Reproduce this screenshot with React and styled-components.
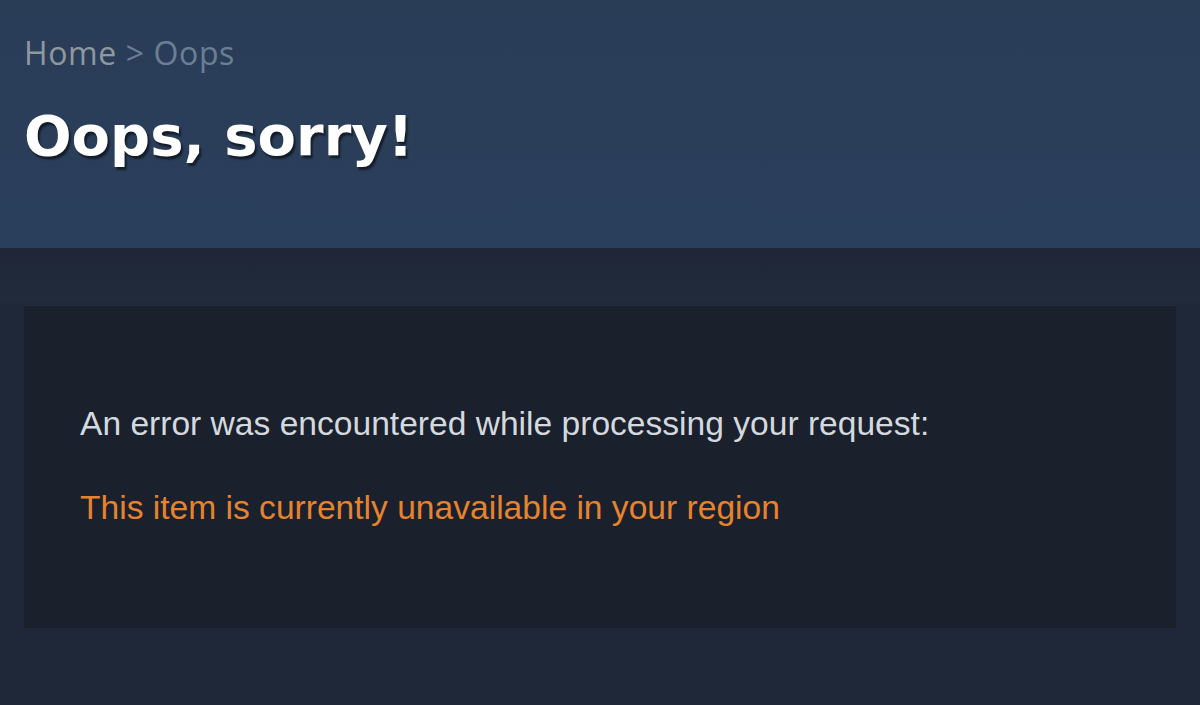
import React from "react";
import styled, { createGlobalStyle } from "styled-components";

const Global = createGlobalStyle`
  html, body { margin: 0; padding: 0; background: #1f2838; }
  body { width: 1200px; height: 705px; overflow: hidden; }
`;

const Page = styled.div`
  width: 1200px;
  height: 705px;
  display: flex;
  flex-direction: column;
  background: #1f2838;
`;

const Header = styled.header`
  height: 248px;
  box-sizing: border-box;
  padding: 34px 24px 0;
  background: linear-gradient(180deg, #2a3d57 0%, #2a3f5c 100%);
  display: flex;
  flex-direction: column;
`;

const Crumbs = styled.div`
  font-family: "Open Sans", "Noto Sans", sans-serif;
  font-size: 32px;
  line-height: 38px;
  letter-spacing: 0.6px;
  color: #8f98a0;
`;

const CrumbCurrent = styled.span`
  color: #6a7f96;
`;

const Title = styled.h1`
  margin: 29px 0 0;
  font-family: "DejaVu Sans", "Open Sans", sans-serif;
  font-weight: 700;
  font-size: 56px;
  line-height: 70px;
  color: #ffffff;
  letter-spacing: 0;
  text-shadow: 2px 3px 2px rgba(0, 0, 0, 0.55);
`;

const Body = styled.main`
  flex: 1;
  padding: 57px 24px 0;
  background: linear-gradient(180deg, #1e2636 0px, #212b3c 50px, #1f2838 58px);
`;

const Panel = styled.section`
  height: 323px;
  box-sizing: border-box;
  padding: 97px 56px 0;
  background: #1a202c;
  border-top: 1px solid #222c3c;
`;

const Message = styled.p`
  margin: 0;
  font-family: "Liberation Sans", Arial, sans-serif;
  font-size: 33.6px;
  line-height: 42px;
  color: #d3d9df;
`;

const ErrorText = styled(Message)`
  margin-top: 42px;
  color: #e5832f;
`;

export default function App() {
  return (
    <Page>
      <Global />
      <Header>
        <Crumbs>
          Home <CrumbCurrent>&gt; Oops</CrumbCurrent>
        </Crumbs>
        <Title>Oops, sorry!</Title>
      </Header>
      <Body>
        <Panel>
          <Message>An error was encountered while processing your request:</Message>
          <ErrorText>This item is currently unavailable in your region</ErrorText>
        </Panel>
      </Body>
    </Page>
  );
}
